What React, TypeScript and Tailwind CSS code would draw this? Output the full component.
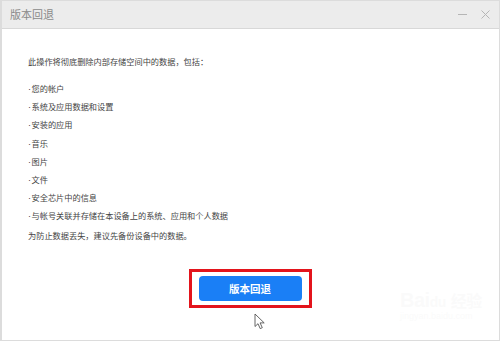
import React from "react";

const items = [
  "您的帐户",
  "系统及应用数据和设置",
  "安装的应用",
  "音乐",
  "图片",
  "文件",
  "安全芯片中的信息",
  "与帐号关联并存储在本设备上的系统、应用和个人数据",
];

export default function App() {
  const font = { fontFamily: '"Noto Sans CJK SC", "Liberation Sans", sans-serif' };
  const latin = { fontFamily: '"Liberation Sans", sans-serif' };
  return (
    <div className="relative w-[500px] h-[345px] bg-white overflow-hidden" style={font}>
      <div className="flex flex-col w-[500px] h-[341px] border-l-[2px] border-r-[1px] border-t-[1px] border-b-[1px] border-[#dcdcdc]">
        <div className="flex items-center justify-between h-[28px] bg-[#ececec] border-b border-[#d8d8d8] pl-[8px] pr-[8px]">
          <span className="text-[11px] text-[#8a8a8a] leading-none">版本回退</span>
          <div className="flex items-center gap-[12px]">
            <svg width="11" height="11" viewBox="0 0 11 11">
              <path d="M1 5.5H10" stroke="#b5b5b5" strokeWidth="1" />
            </svg>
            <svg width="11" height="11" viewBox="0 0 11 11">
              <path d="M1.5 1.5L9.5 9.5M9.5 1.5L1.5 9.5" stroke="#b5b5b5" strokeWidth="1" />
            </svg>
          </div>
        </div>
        <div className="flex flex-col flex-1">
          <div className="flex flex-col pl-[26px] pt-[25px] text-[8.2px] text-[#444]">
            <p className="h-[14px] leading-[14px]">此操作将彻底删除内部存储空间中的数据，包括：</p>
            <div className="flex flex-col mt-[13px] gap-[4.2px]">
              {items.map((t) => (
                <p key={t} className="h-[14px] leading-[14px]">
                  <span style={latin} className="text-[9px] mr-[0.5px]">·</span>
                  {t}
                </p>
              ))}
            </div>
            <p className="h-[14px] leading-[14px] mt-[6px]">为防止数据丢失，建议先备份设备中的数据。</p>
          </div>
          <div className="flex justify-center mt-[27px]">
            <div className="ml-[-1px] border-[3px] border-[#e3141c] px-[7px] py-[4px]">
              <div className="w-[103px] h-[25px] rounded-[4px] bg-[#1a7ff6] flex items-center justify-center text-white text-[10.5px] font-bold">
                版本回退
              </div>
            </div>
          </div>
          <div className="flex justify-center mt-[5px] pl-[18px]">
            <svg width="12" height="17" viewBox="0 0 12 17">
              <path d="M1 1V13.5L4 10.7L6.2 15.6L8.3 14.7L6.1 9.9H10.2Z" fill="white" stroke="#555" strokeWidth="0.9" strokeLinejoin="round" />
            </svg>
          </div>
        </div>
      </div>
      <div className="absolute left-[400px] top-[290px] flex flex-col items-start opacity-[0.035] text-[#888]">
        <span className="text-[20px] font-bold leading-none tracking-tight" style={latin}>
          Bai<span className="text-[14px]">du</span> <span className="text-[16px]" style={font}>经验</span>
        </span>
        <span className="text-[9px] leading-none mt-[2px]" style={latin}>jingyan.baidu.com</span>
      </div>
    </div>
  );
}
